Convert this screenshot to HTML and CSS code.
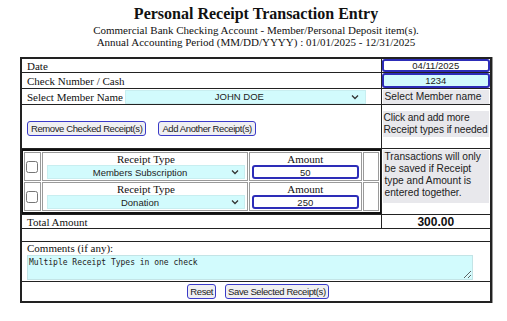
FILE: index.html
```html
<!DOCTYPE html>
<html>
<head>
<meta charset="utf-8">
<link rel="stylesheet" href="styles.css">
</head>
<body>
<div class="page">
  <header class="head">
    <h1 class="title">Personal Receipt Transaction Entry</h1>
    <div class="sub">Commercial Bank Checking Account - Member/Personal Deposit item(s).</div>
    <div class="sub">Annual Accounting Period (MM/DD/YYYY) : 01/01/2025 - 12/31/2025</div>
  </header>
  <table class="form">
    <tr class="r-date">
      <td class="lbl">Date</td>
      <td class="rc"><input class="inp" type="text" value="04/11/2025"></td>
    </tr>
    <tr class="r-check">
      <td class="lbl">Check Number / Cash</td>
      <td class="rc"><input class="inp cyan" type="text" value="1234"></td>
    </tr>
    <tr class="r-member">
      <td class="lbl">
        <div class="member">
          <span>Select Member Name</span>
          <span class="selwrap member-sel">
            <select class="sel"><option>JOHN DOE</option></select>
            <svg class="chev" width="8" height="6" viewBox="0 0 8 6"><path d="M1 1.5 L4 4.5 L7 1.5" fill="none" stroke="#333" stroke-width="1.3"/></svg>
          </span>
        </div>
      </td>
      <td class="rc top"><div class="note one">Select Member name</div></td>
    </tr>
    <tr class="r-btns">
      <td class="lbl">
        <div class="btns">
          <button class="btn">Remove Checked Receipt(s)</button>
          <button class="btn">Add Another Receipt(s)</button>
        </div>
      </td>
      <td class="rc top"><div class="note two">Click and add more<br>Receipt types if needed</div></td>
    </tr>
    <tr class="r-items">
      <td class="items-cell">
        <table class="items">
          <tr>
            <td class="cb"><input type="checkbox"></td>
            <td class="rt">
              <div class="hd">Receipt Type</div>
              <span class="selwrap rt-sel">
                <select class="sel"><option>Members Subscription</option></select>
                <svg class="chev" width="8" height="6" viewBox="0 0 8 6"><path d="M1 1.5 L4 4.5 L7 1.5" fill="none" stroke="#333" stroke-width="1.3"/></svg>
              </span>
            </td>
            <td class="am">
              <div class="hd">Amount</div>
              <input class="inp amt" type="text" value="50">
            </td>
            <td class="blank"></td>
          </tr>
          <tr>
            <td class="cb"><input type="checkbox"></td>
            <td class="rt">
              <div class="hd">Receipt Type</div>
              <span class="selwrap rt-sel">
                <select class="sel"><option>Donation</option></select>
                <svg class="chev" width="8" height="6" viewBox="0 0 8 6"><path d="M1 1.5 L4 4.5 L7 1.5" fill="none" stroke="#333" stroke-width="1.3"/></svg>
              </span>
            </td>
            <td class="am">
              <div class="hd">Amount</div>
              <input class="inp amt" type="text" value="250">
            </td>
            <td class="blank"></td>
          </tr>
        </table>
      </td>
      <td class="rc top"><div class="note three">Transactions will only be saved if Receipt type and Amount is entered together.</div></td>
    </tr>
    <tr class="r-total">
      <td class="lbl">Total Amount</td>
      <td class="rc total">300.00</td>
    </tr>
    <tr class="r-empty"><td colspan="2"></td></tr>
    <tr class="r-comments">
      <td colspan="2" class="lbl comments">
        <div>Comments (if any):</div>
        <textarea class="ta">Multiple Receipt Types in one check</textarea>
      </td>
    </tr>
    <tr class="r-save">
      <td colspan="2">
        <div class="save">
          <button class="btn">Reset</button>
          <button class="btn">Save Selected Receipt(s)</button>
        </div>
      </td>
    </tr>
  </table>
</div>
</body>
</html>
```

FILE: styles.css
```css
* { box-sizing: border-box; }
html, body { margin: 0; padding: 0; background: #fff; }
body {
  font-family: "Liberation Serif", "Times New Roman", serif;
  font-size: 11px;
  color: #111;
}
.page { padding: 4px 15px 0 20px; width: 507px; }
.head { text-align: center; margin-bottom: 9px; }
.title {
  font-family: "Liberation Serif", "Times New Roman", serif;
  font-size: 16px;
  font-weight: bold;
  margin: 0;
  line-height: 20px;
}
.sub { font-size: 11px; line-height: 12px; }

.form {
  width: 472px;
  border-collapse: collapse;
  border: 2px solid #222;
  box-shadow: 1px 0 0 #999;
}
.form > tbody > tr > td {
  border: 1px solid #222;
  padding: 0;
  vertical-align: middle;
  line-height: 12px;
}
.lbl { padding-left: 5px !important; }
.rc { width: 110px; text-align: center; }
.rc.top { vertical-align: top; }

.r-date td { height: 13px; }
.r-check td { height: 15px; }
.r-member td { height: 16px; }
.r-btns td { height: 44px; }
.r-total td { height: 14px; }
.r-empty td { height: 13px; }
.r-comments td { height: 40px; }
.r-save td { height: 20px; }

.inp {
  display: block;
  width: 100%;
  height: 14px;
  margin: 0;
  border: 2px solid #2d2db8;
  border-radius: 3px;
  background: #fff;
  font-family: "Liberation Sans", Arial, sans-serif;
  font-size: 9.5px;
  text-align: center;
  padding: 0;
  color: #222;
}
.r-date .inp { height: 13px; }
.r-check .inp { height: 15px; }
.inp.cyan { background: #d2fbfd; }

.member { display: flex; align-items: center; gap: 2px; }
.selwrap { position: relative; display: inline-block; }
.sel {
  -webkit-appearance: none;
  appearance: none;
  width: 100%;
  height: 14px;
  border: 1px solid #c8eef0;
  background: #d2fbfd;
  font-family: "Liberation Sans", Arial, sans-serif;
  font-size: 9.5px;
  text-align: center;
  text-align-last: center;
  padding: 0 12px 0 0;
  color: #222;
  border-radius: 0;
  display: block;
}
.chev { position: absolute; right: 7px; top: 4px; }
.member-sel { width: 241px; }

.note {
  background: #e8e8ec;
  font-family: "Liberation Sans", Arial, sans-serif;
  font-size: 10.2px;
  line-height: 12px;
  text-align: left;
  padding: 1px 0 1px 2px;
  color: #222;
  margin: 1px 1px 0 1px;
}
.note.two { margin-top: 6px; white-space: nowrap; letter-spacing: -0.1px; padding-left: 1px; }
.note.three { padding-bottom: 4px; }

.btns { display: flex; gap: 12px; padding-top: 4px; }
.btn {
  font-family: "Liberation Sans", Arial, sans-serif;
  font-size: 9.5px;
  letter-spacing: -0.4px;
  background: #efeff2;
  border: 1px solid #3a3ac8;
  border-radius: 3px;
  padding: 1px 3px;
  height: 15px;
  line-height: 11px;
  color: #222;
}

.items-cell { padding: 0 !important; }
.items {
  width: 100%;
  border-collapse: separate;
  border-spacing: 1px;
  border: 1px solid #111;
  border-top-width: 2px;
  border-bottom-width: 2px;
}
.items td {
  border: 1px solid #9a9a9a;
  padding: 0;
  height: 26px;
  vertical-align: top;
}
.items .cb { width: 17px; text-align: center; vertical-align: middle; }
.items .cb input { margin: 0; width: 12px; height: 12px; vertical-align: middle; }
.items .rt { width: 207px; text-align: center; padding: 0 2px 1px 4px; }
.items .am { width: 113px; text-align: center; padding: 0 2px 1px 2px; }
.items .blank { width: 16px; }
.hd { line-height: 12px; font-size: 11px; }
.rt-sel { width: 100%; display: block; }
.rt-sel .chev { right: 6px; }
.amt { height: 14px; }

.total {
  font-family: "Liberation Sans", Arial, sans-serif;
  font-weight: bold;
  font-size: 12px;
}

.comments { vertical-align: top !important; padding-right: 17px !important; }
.comments div { line-height: 13px; }
.ta {
  display: block;
  width: 100%;
  height: 25px;
  margin: 0;
  background: #d2fbfd;
  border: 1px solid #c3e4e6;
  font-family: "DejaVu Sans Mono", monospace;
  font-size: 8px;
  padding: 2px 1px;
  color: #222;
}

.save { display: flex; justify-content: center; gap: 9px; padding-left: 4px; }
.save .btn { padding: 1px 2px; }
```
